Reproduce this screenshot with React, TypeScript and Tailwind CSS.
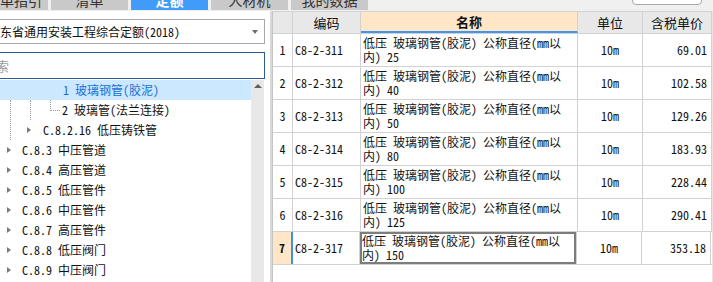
import React from 'react';

const cjk = "font-['Noto_Sans_Mono_CJK_SC','Noto_Sans_CJK_SC',monospace]";

const tabs = [
  { label: '清单指引', active: false },
  { label: '清单', active: false },
  { label: '定额', active: true },
  { label: '人材机', active: false },
  { label: '我的数据', active: false },
];

const groups = [
  { code: 'C.8.3', name: '中压管道' },
  { code: 'C.8.4', name: '高压管道' },
  { code: 'C.8.5', name: '低压管件' },
  { code: 'C.8.6', name: '中压管件' },
  { code: 'C.8.7', name: '高压管件' },
  { code: 'C.8.8', name: '低压阀门' },
  { code: 'C.8.9', name: '中压阀门' },
];

const rows = [
  { no: 1, code: 'C8-2-311', size: '25', price: '69.01' },
  { no: 2, code: 'C8-2-312', size: '40', price: '102.58' },
  { no: 3, code: 'C8-2-313', size: '50', price: '129.26' },
  { no: 4, code: 'C8-2-314', size: '80', price: '183.93' },
  { no: 5, code: 'C8-2-315', size: '100', price: '228.44' },
  { no: 6, code: 'C8-2-316', size: '125', price: '290.41' },
  { no: 7, code: 'C8-2-317', size: '150', price: '353.18' },
];

function Caret() {
  return (
    <span className="w-0 h-0 border-l-[4px] border-l-[#7a7a7a] border-y-[3.5px] border-y-transparent" />
  );
}

function TreePanel() {
  return (
    <div className="relative flex h-[202px]">
      <div className="w-[251px] flex flex-col text-[12px] text-[#111]">
        <div className="h-[20px] bg-[#cce8ff] flex items-center pl-[63px] text-[#1a6ed6]">
          1 玻璃钢管(胶泥)
        </div>
        <div className="relative h-[20px] flex items-center pl-[62px]">
          2 玻璃管(法兰连接)
        </div>
        <div className="h-[20px] flex items-center pl-[27px] gap-[12px]">
          <Caret />
          <span>C.8.2.16 低压铸铁管</span>
        </div>
        {groups.map((g) => (
          <div key={g.code} className="h-[20px] flex items-center pl-[7px] gap-[11px]">
            <Caret />
            <span>
              {g.code} {g.name}
            </span>
          </div>
        ))}
      </div>
      {/* tree guide lines */}
      <span className="absolute left-[10px] top-[20px] h-[40px] border-l border-dotted border-[#9a9a9a]" />
      <span className="absolute left-[30px] top-[20px] h-[20px] border-l border-dotted border-[#9a9a9a]" />
      <span className="absolute left-[50px] top-[20px] w-[10px] h-[11px] border-l border-b border-dotted border-[#9a9a9a]" />
      <div className="w-[13px] bg-[#e8e8e8] flex justify-center pt-[4px]">
        <span className="w-0 h-0 border-b-[4px] border-b-[#5f5f5f] border-x-[4px] border-x-transparent" />
      </div>
    </div>
  );
}

function Table() {
  const cell = 'border-r border-[#d2d2d2] flex items-center shrink-0';
  return (
    <div className={`w-[440px] bg-white border-l border-[#c4c4c4] text-[12px] text-[#111] ${cjk}`}>
      <div className="flex h-[23px] border-t border-b border-[#d2d2d2] text-[13px]">
        <div className={`${cell} w-[20px] bg-[#e8e8e8]`} />
        <div className={`${cell} w-[68px] bg-[#e8e8e8] justify-center`}>编码</div>
        <div className={`${cell} w-[217px] bg-[#ffe6c7] justify-center font-bold border-b-2 border-b-[#4096ee]`}>
          名称
        </div>
        <div className={`${cell} w-[65px] bg-[#e8e8e8] justify-center`}>单位</div>
        <div className={`${cell} w-[69px] bg-[#e8e8e8] justify-center`}>含税单价</div>
      </div>
      {rows.map((r) => {
        const sel = r.no === 7;
        return (
          <div key={r.no} className="flex h-[33px] border-b border-[#d2d2d2]">
            <div
              className={`${cell} w-[20px] justify-center ${
                sel ? 'bg-[#ffe6c7] font-bold border-r-2 border-r-[#3b8ff0]' : ''
              }`}
            >
              {r.no}
            </div>
            <div className={`${cell} ${sel ? 'w-[67px]' : 'w-[68px]'} pl-[2px]`}>{r.code}</div>
            <div
              className={`${cell} w-[217px] pl-[2px] leading-[14px] ${
                sel ? 'shadow-[inset_0_0_0_2px_#7d7d7d]' : ''
              }`}
            >
              <div>
                低压 玻璃钢管(胶泥) 公称直径(mm以
                <br />
                内) {r.size}
              </div>
            </div>
            <div className={`${cell} w-[65px] justify-center`}>10m</div>
            <div className={`${cell} w-[69px] justify-end pr-[4px]`}>{r.price}</div>
          </div>
        );
      })}
    </div>
  );
}

export default function App() {
  return (
    <div className={`w-[713px] h-[282px] overflow-hidden bg-[#e4e4e4] flex flex-col ${cjk}`}>
      <div className="h-[11px] shrink-0 bg-[#f0f0f0] flex items-start gap-[3px] overflow-hidden">
        {tabs.map((t, i) => (
          <div
            key={t.label}
            className={`mt-[-10px] h-[20px] w-[77px] shrink-0 flex items-center text-[14px] ${
              i === 0 ? 'ml-[-29px] justify-end pr-[6px]' : 'justify-center'
            } ${t.active ? 'bg-[#419bf9] text-white font-bold' : 'bg-[#c9c9c9] text-[#333]'}`}
          >
            {t.label}
          </div>
        ))}
        <div className="ml-auto mr-[11px] mt-[-11px] w-[70px] h-[16px] border border-[#a8a8a8] rounded bg-white" />
      </div>
      <div className="flex flex-1">
        <div className="w-[270px] bg-white overflow-hidden pt-[8px]">
          <div className="ml-[-22px] mr-[5px] h-[25px] border border-[#a8a8a8] flex items-center pl-[9px] pr-[6px] text-[12px] text-[#111]">
            <span className="flex-1 whitespace-nowrap">广东省通用安装工程综合定额(2018)</span>
            <span className="w-0 h-0 border-t-[4px] border-t-[#707070] border-x-[3.5px] border-x-transparent" />
          </div>
          <div className="ml-[-25px] mr-[5px] mt-[8px] h-[27px] border border-[#2d5c9c] flex items-center pl-[7px] text-[13px] text-[#9a9a9a]">
            搜索
          </div>
          <div className="mt-[1px]">
            <TreePanel />
          </div>
        </div>
        <div className="w-[2px] bg-[#d8d8d8]" />
        <Table />
      </div>
    </div>
  );
}
